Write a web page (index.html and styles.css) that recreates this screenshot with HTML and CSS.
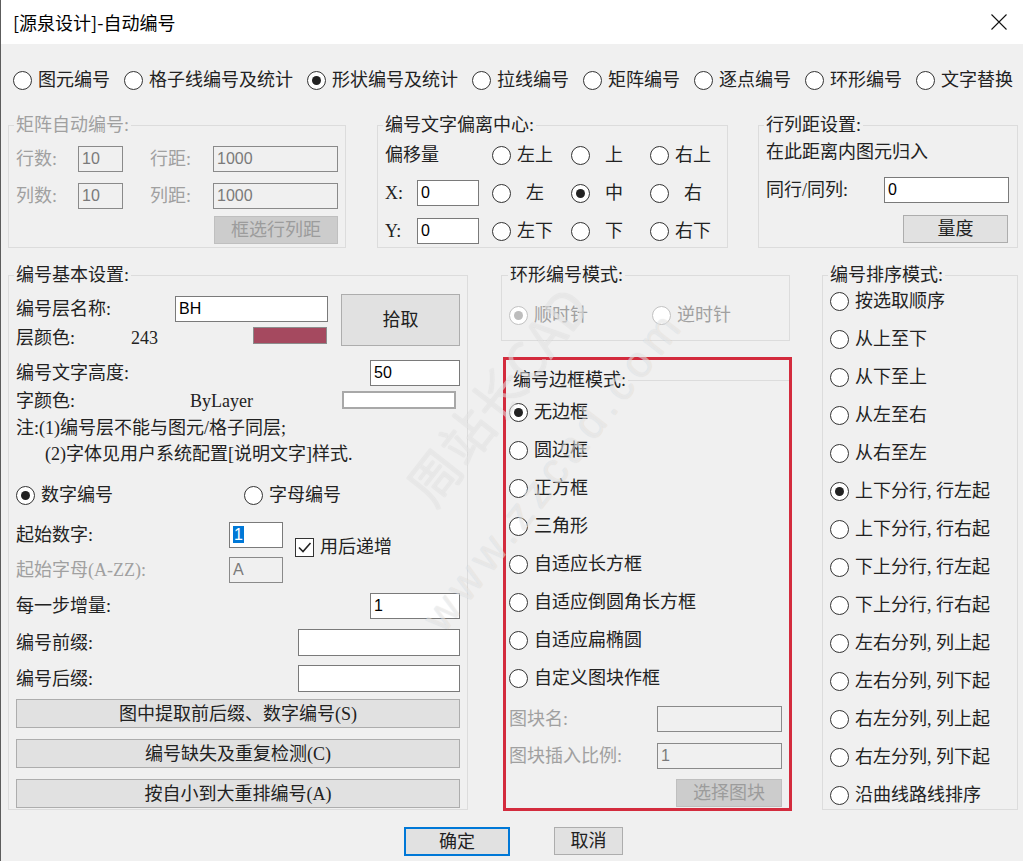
FILE: index.html
```html
<!DOCTYPE html>
<html>
<head>
<meta charset="utf-8">
<title>自动编号</title>
<link rel="stylesheet" href="styles.css">
</head>
<body>
<div class="win">
	<div class="titlebar">
		<span class="title">[源泉设计]-自动编号</span>
		<svg class="close" width="16" height="16" viewBox="0 0 16 16"><path d="M0.5 0.5L15.5 15.5M15.5 0.5L0.5 15.5" stroke="#111" stroke-width="1.1" fill="none"/></svg>
	</div>
	<div class="client">
		<!-- 顶部模式选择 -->
		<div class="modes">
			<div class="opt"><span class="rb"></span>图元编号</div>
			<div class="opt"><span class="rb"></span>格子线编号及统计</div>
			<div class="opt"><span class="rb on"></span>形状编号及统计</div>
			<div class="opt"><span class="rb"></span>拉线编号</div>
			<div class="opt"><span class="rb"></span>矩阵编号</div>
			<div class="opt"><span class="rb"></span>逐点编号</div>
			<div class="opt"><span class="rb"></span>环形编号</div>
			<div class="opt"><span class="rb"></span>文字替换</div>
		</div>

		<div class="row-top">
			<fieldset class="grp g1 off">
				<legend>矩阵自动编号:</legend>
				<div class="ln"><span class="w62">行数:</span><span class="tb dis w45">10</span><span class="w27"></span><span class="w63">行距:</span><span class="tb dis w125">1000</span></div>
				<div class="ln"><span class="w62">列数:</span><span class="tb dis w45">10</span><span class="w27"></span><span class="w63">列距:</span><span class="tb dis w125">1000</span></div>
				<div class="ln bt"><span class="btn dis b-frame">框选行列距</span></div>
			</fieldset>

			<fieldset class="grp g2">
				<legend>编号文字偏离中心:</legend>
				<div class="ln"><span class="w107">偏移量</span>
					<div class="opt w79"><span class="rb"></span>左上</div>
					<div class="opt w79"><span class="rb"></span><span class="pad">上</span></div>
					<div class="opt w79"><span class="rb"></span>右上</div>
				</div>
				<div class="ln"><span class="w32">X:</span><span class="tb w62">0</span><span class="w13"></span>
					<div class="opt w79"><span class="rb"></span><span class="pad">左</span></div>
					<div class="opt w79"><span class="rb on"></span><span class="pad">中</span></div>
					<div class="opt w79"><span class="rb"></span><span class="pad">右</span></div>
				</div>
				<div class="ln"><span class="w32">Y:</span><span class="tb w62">0</span><span class="w13"></span>
					<div class="opt w79"><span class="rb"></span>左下</div>
					<div class="opt w79"><span class="rb"></span><span class="pad">下</span></div>
					<div class="opt w79"><span class="rb"></span>右下</div>
				</div>
			</fieldset>

			<fieldset class="grp g3">
				<legend>行列距设置:</legend>
				<div class="ln">在此距离内图元归入</div>
				<div class="ln"><span class="w118">同行/同列:</span><span class="tb w125">0</span></div>
				<div class="ln bt"><span class="btn b-measure">量度</span></div>
			</fieldset>
		</div>

		<div class="row-main">
			<fieldset class="grp g4">
				<legend>编号基本设置:</legend>
				<div class="pick">
					<div class="stack">
						<div class="ln"><span class="w159">编号层名称:</span><span class="tb w153">BH</span></div>
						<div class="ln"><span class="w115">层颜色:</span><span class="w122">243</span><span class="swatch"></span></div>
					</div>
					<span class="btn b-pick">拾取</span>
				</div>
				<div class="ln sb r3"><span>编号文字高度:</span><span class="tb w90">50</span></div>
				<div class="ln r4"><span class="w174">字颜色:</span><span>ByLayer</span><span class="swatch2"></span></div>
				<div class="ln r5">注:(1)编号层不能与图元/格子同层;</div>
				<div class="ln r6">(2)字体见用户系统配置[说明文字]样式.</div>
				<div class="ln r7">
					<div class="opt w228"><span class="rb on"></span>数字编号</div>
					<div class="opt"><span class="rb"></span>字母编号</div>
				</div>
				<div class="ln r8"><span class="w213">起始数字:</span><span class="tb w54"><span class="sel">1</span></span>
					<div class="opt chkopt"><span class="chk"><svg width="17" height="17" viewBox="0 0 17 17"><path d="M3 8.5L7 12.5L14.5 4" stroke="#222" stroke-width="1.6" fill="none"/></svg></span>用后递增</div>
				</div>
				<div class="ln r9 off"><span class="w213">起始字母(A-ZZ):</span><span class="tb dis w54">A</span></div>
				<div class="ln sb r10"><span>每一步增量:</span><span class="tb w90">1</span></div>
				<div class="ln sb r11"><span>编号前缀:</span><span class="tb w162"></span></div>
				<div class="ln sb r12"><span>编号后缀:</span><span class="tb w162"></span></div>
				<span class="btn wide bt1">图中提取前后缀、数字编号(S)</span>
				<span class="btn wide bt2">编号缺失及重复检测(C)</span>
				<span class="btn wide bt2">按自小到大重排编号(A)</span>
			</fieldset>

			<div class="mid">
				<fieldset class="grp g5">
					<legend>环形编号模式:</legend>
					<div class="ln">
						<div class="opt w143 off"><span class="rb on"></span>顺时针</div>
						<div class="opt off"><span class="rb"></span>逆时针</div>
					</div>
				</fieldset>
				<div class="redbox">
					<fieldset class="grp g7">
						<legend>编号边框模式:</legend>
						<div class="ln first"><div class="opt"><span class="rb on"></span>无边框</div></div>
						<div class="ln"><div class="opt"><span class="rb"></span>圆边框</div></div>
						<div class="ln"><div class="opt"><span class="rb"></span>正方框</div></div>
						<div class="ln"><div class="opt"><span class="rb"></span>三角形</div></div>
						<div class="ln"><div class="opt"><span class="rb"></span>自适应长方框</div></div>
						<div class="ln"><div class="opt"><span class="rb"></span>自适应倒圆角长方框</div></div>
						<div class="ln"><div class="opt"><span class="rb"></span>自适应扁椭圆</div></div>
						<div class="ln"><div class="opt"><span class="rb"></span>自定义图块作框</div></div>
						<div class="ln off blk1"><span class="w148">图块名:</span><span class="tb dis w125"></span></div>
						<div class="ln off blk2"><span class="w148">图块插入比例:</span><span class="tb dis w125">1</span></div>
						<div class="ln blk2"><span class="btn dis b-block">选择图块</span></div>
					</fieldset>
				</div>
			</div>

			<fieldset class="grp g6">
				<legend>编号排序模式:</legend>
				<div class="ln first"><div class="opt"><span class="rb"></span>按选取顺序</div></div>
				<div class="ln"><div class="opt"><span class="rb"></span>从上至下</div></div>
				<div class="ln"><div class="opt"><span class="rb"></span>从下至上</div></div>
				<div class="ln"><div class="opt"><span class="rb"></span>从左至右</div></div>
				<div class="ln"><div class="opt"><span class="rb"></span>从右至左</div></div>
				<div class="ln"><div class="opt"><span class="rb on"></span>上下分行, 行左起</div></div>
				<div class="ln"><div class="opt"><span class="rb"></span>上下分行, 行右起</div></div>
				<div class="ln"><div class="opt"><span class="rb"></span>下上分行, 行左起</div></div>
				<div class="ln"><div class="opt"><span class="rb"></span>下上分行, 行右起</div></div>
				<div class="ln"><div class="opt"><span class="rb"></span>左右分列, 列上起</div></div>
				<div class="ln"><div class="opt"><span class="rb"></span>左右分列, 列下起</div></div>
				<div class="ln"><div class="opt"><span class="rb"></span>右左分列, 列上起</div></div>
				<div class="ln"><div class="opt"><span class="rb"></span>右左分列, 列下起</div></div>
				<div class="ln"><div class="opt"><span class="rb"></span>沿曲线路线排序</div></div>
			</fieldset>
		</div>

		<div class="footer">
			<span class="btn b-ok">确定</span>
			<span class="btn b-cancel">取消</span>
		</div>
	</div>
	<!-- 水印 -->
	<div class="wm wm1">周站长CAD</div>
	<div class="wm wm2">www.zzcad.com</div>
</div>
</body>
</html>
```

FILE: styles.css
```css
*{
	margin: 0;
	padding: 0;
	box-sizing: border-box;
}
body {
	background: #fff;
	font: 18px/20px "Liberation Serif", "Noto Sans CJK SC", serif;
	color: #222;
}
.win {
	width: 1023px;
	height: 861px;
	background: #f0f0f0;
	border-left: 1px solid #5c5c5c;
	position: relative;
	overflow: hidden;
}
.titlebar {
	height: 44px;
	background: #fff;
	display: flex;
	align-items: center;
	justify-content: space-between;
	padding: 0 16px 0 12px;
}
.title {
	font-family: "Noto Sans CJK SC", sans-serif;
	color: #000;
}
.client {
	padding-left: 7px;
}

/* 单选框 */
.opt {
	display: flex;
	align-items: center;
	gap: 6px;
	white-space: nowrap;
	flex: none;
}
.rb {
	width: 19px;
	height: 19px;
	border: 1px solid #333;
	border-radius: 50%;
	background: #fff;
	flex: none;
	display: flex;
	align-items: center;
	justify-content: center;
}
.rb.on::after {
	content: "";
	width: 9px;
	height: 9px;
	border-radius: 50%;
	background: #222;
}
.off .rb {
	border-color: #c2c2c2;
}
.off .rb.on::after {
	background: #bdbdbd;
}
.pad {
	padding-left: 9px;
}
.chk {
	width: 19px;
	height: 19px;
	border: 1px solid #333;
	background: #fff;
	display: flex;
	align-items: center;
	justify-content: center;
}

.modes {
	display: flex;
	gap: 14px;
	height: 26px;
	margin-top: 23px;
	padding-left: 5px;
}

/* 分组框 */
fieldset.grp {
	border: 1px solid #dcdcdc;
	padding: 0 7px;
	min-width: 0;
	flex: none;
}
legend {
	padding: 0 2px;
	margin-left: -2px;
	line-height: 20px;
}
.off, .off legend {
	color: #a0a0a0;
}
.ln {
	display: flex;
	align-items: center;
	height: 26px;
	white-space: nowrap;
}
.sb {
	justify-content: space-between;
}

/* 文本框 */
.tb {
	height: 26px;
	border: 1px solid #7a7a7a;
	background: #fff;
	font: 16px/24px "Liberation Sans", sans-serif;
	padding: 0 3px;
	color: #000;
	flex: none;
}
.tb.dis {
	background: #f0f0f0;
	color: #7a7a7a;
	border-color: #8a8a8a;
}
.sel {
	background: #0078d7;
	color: #fff;
	padding: 0 1px;
}

/* 按钮 */
.btn {
	height: 28px;
	border: 1px solid #adadad;
	background: #e1e1e1;
	display: flex;
	align-items: center;
	justify-content: center;
	flex: none;
	color: #222;
}
.btn.dis {
	background: #cccccc;
	border-color: #bfbfbf;
	color: #9c9c9c;
}

.w13 { width: 13px; flex: none; }
.w27 { width: 27px; flex: none; }
.w32 { width: 32px; flex: none; }
.w45 { width: 45px; }
.w54 { width: 54px; }
.w62 { width: 62px; flex: none; }
.w63 { width: 63px; flex: none; }
.w79 { width: 79px; }
.w90 { width: 90px; }
.w107 { width: 107px; flex: none; }
.w115 { width: 115px; flex: none; }
.w118 { width: 118px; flex: none; }
.w122 { width: 122px; flex: none; }
.w125 { width: 125px; }
.w143 { width: 143px; }
.w148 { width: 148px; flex: none; }
.w153 { width: 153px; }
.w159 { width: 159px; flex: none; }
.w162 { width: 162px; }
.w174 { width: 174px; flex: none; }
.w213 { width: 213px; flex: none; }
.w228 { width: 228px; }

.row-top {
	display: flex;
	margin-top: 22px;
}
.g1 {
	width: 338px;
	height: 133px;
}
.g1 .ln {
	margin-top: 11px;
}
.g1 .ln.bt {
	margin-top: 7px;
	height: 28px;
}
.b-frame {
	margin-left: 198px;
	width: 124px;
}
.g2 {
	width: 351px;
	height: 133px;
	margin-left: 31px;
	padding: 0 8px;
}
.g2 .ln {
	margin-top: 12px;
}
.g2 .ln:first-of-type {
	margin-top: 7px;
}
.g3 {
	width: 260px;
	height: 133px;
	margin-left: 30px;
	padding: 0 8px;
}
.g3 .ln {
	margin-top: 12px;
}
.g3 .ln:first-of-type {
	margin-top: 4px;
}
.g3 .ln.bt {
	height: 28px;
}
.b-measure {
	margin-left: 137px;
	width: 105px;
}

.row-main {
	display: flex;
	margin-top: 17px;
}
.g4 {
	width: 460px;
	height: 545px;
	padding: 0 6px 0 7px;
}
.pick {
	display: flex;
	margin-top: 9px;
}
.stack {
	width: 325px;
}
.stack .ln:first-child {
	margin-top: 2px;
}
.stack .ln + .ln {
	margin-top: 3px;
}
.swatch {
	width: 74px;
	height: 17px;
	background: #a5495f;
	border: 1px solid #8c8c8c;
	margin-top: -5px;
}
.b-pick {
	width: 119px;
	height: 52px;
}
.r3 { margin-top: 8px; height: 27px; }
.r4 { margin-top: 2px; }
.swatch2 {
	width: 114px;
	height: 18px;
	margin: -2px 4px 0 auto;
	border: 2px solid #a8a8a8;
	background: #fff;
}
.r5 { margin-top: 1px; }
.r6 { padding-left: 29px; }
.r7 { margin-top: 15px; }
.r8 { margin-top: 14px; }
.chkopt {
	align-self: flex-start;
	margin: 15px 0 0 12px;
}
.r9 { margin-top: 9px; }
.r10 { margin-top: 10px; }
.r11 { margin-top: 10px; height: 27px; }
.r12 { margin-top: 9px; height: 27px; }
.r11 .tb, .r12 .tb { height: 27px; }
.wide {
	width: 444px;
	height: 29px;
}
.bt1 { margin-top: 7px; }
.bt2 { margin-top: 11px; }

.mid {
	width: 291px;
	margin-left: 33px;
	flex: none;
}
.g5 {
	width: 289px;
	height: 76px;
}
.g5 legend {
	margin-left: -1px;
}
.g5 .ln {
	margin-top: 17px;
}
.redbox {
	margin: 16px 0 0 2px;
	width: 289px;
	height: 454px;
	border: 3px solid #d32b3d;
}
fieldset.g7 {
	margin-top: 10px;
	border: none;
	border-top: 1px solid #dcdcdc;
	padding: 0 0 0 3px;
}
.g7 legend {
	margin-left: 2px;
}
.g7 .ln {
	margin-top: 12px;
}
.g7 .ln.first {
	margin-top: 9px;
}
.g7 .ln.blk1 {
	margin-top: 15px;
}
.g7 .ln.blk2 {
	margin-top: 11px;
}
.b-block {
	margin-left: 167px;
	width: 106px;
}
.g6 {
	width: 196px;
	height: 545px;
	margin-left: 30px;
}
.g6 .ln {
	margin-top: 12px;
}
.g6 .ln.first {
	margin-top: 3px;
}

.footer {
	display: flex;
	margin-top: 16px;
	padding-left: 396px;
}
.b-ok {
	width: 106px;
	height: 29px;
	border: 2px solid #0078d7;
}
.b-cancel {
	width: 69px;
	margin-left: 44px;
}

/* 水印 */
.wm {
	position: absolute;
	pointer-events: none;
	white-space: nowrap;
	color: rgba(255, 255, 255, 0.5);
	text-shadow: 0 0 1px rgba(0, 0, 0, 0.14);
	font-family: "Noto Sans CJK SC", sans-serif;
	transform: translate(-50%, -50%) rotate(-52deg);
}
.wm1 {
	left: 495px;
	top: 395px;
	font-size: 52px;
	line-height: 60px;
}
.wm2 {
	left: 552px;
	top: 470px;
	font-size: 44px;
	line-height: 50px;
	letter-spacing: 6px;
	font-family: "Liberation Sans", sans-serif;
}
```
